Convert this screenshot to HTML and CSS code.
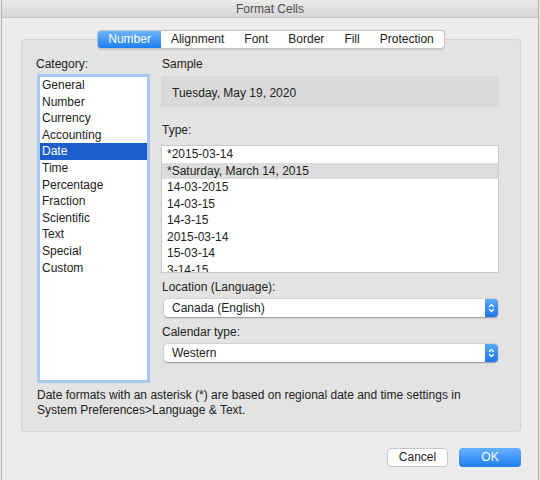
FILE: index.html
```html
<!DOCTYPE html>
<html>
<head>
<meta charset="utf-8">
<link rel="stylesheet" href="styles.css">
</head>
<body>
<div class="window">
  <div class="titlebar">Format Cells</div>
  <div class="tabs-row">
    <div class="tabs">
      <span class="tab selected">Number</span>
      <span class="tab">Alignment</span>
      <span class="tab">Font</span>
      <span class="tab">Border</span>
      <span class="tab">Fill</span>
      <span class="tab">Protection</span>
    </div>
  </div>
  <div class="panel">
    <div class="columns">
      <div class="left-col">
        <div class="label">Category:</div>
        <ul class="category-list">
          <li>General</li>
          <li>Number</li>
          <li>Currency</li>
          <li>Accounting</li>
          <li class="active">Date</li>
          <li>Time</li>
          <li>Percentage</li>
          <li>Fraction</li>
          <li>Scientific</li>
          <li>Text</li>
          <li>Special</li>
          <li>Custom</li>
        </ul>
      </div>
      <div class="right-col">
        <div class="label">Sample</div>
        <div class="sample">Tuesday, May 19, 2020</div>
        <div class="label type-label">Type:</div>
        <ul class="type-list">
          <li>*2015-03-14</li>
          <li class="hl">*Saturday, March 14, 2015</li>
          <li>14-03-2015</li>
          <li>14-03-15</li>
          <li>14-3-15</li>
          <li>2015-03-14</li>
          <li>15-03-14</li>
          <li>3-14-15</li>
        </ul>
        <div class="label loc-label">Location (Language):</div>
        <div class="select">
          <span class="select-text">Canada (English)</span>
          <span class="select-btn"><svg width="13" height="18" viewBox="0 0 13 18"><path d="M4.5 7.5 L6.5 5.5 L8.5 7.5 M4.5 10.5 L6.5 12.5 L8.5 10.5" fill="none" stroke="#fff" stroke-width="1.3" stroke-linecap="round" stroke-linejoin="round"/></svg></span>
        </div>
        <div class="label cal-label">Calendar type:</div>
        <div class="select">
          <span class="select-text">Western</span>
          <span class="select-btn"><svg width="13" height="18" viewBox="0 0 13 18"><path d="M4.5 7.5 L6.5 5.5 L8.5 7.5 M4.5 10.5 L6.5 12.5 L8.5 10.5" fill="none" stroke="#fff" stroke-width="1.3" stroke-linecap="round" stroke-linejoin="round"/></svg></span>
        </div>
      </div>
    </div>
    <p class="note">Date formats with an asterisk (*) are based on regional date and time settings in<br>System Preferences&gt;Language &amp; Text.</p>
  </div>
  <div class="buttons">
    <span class="btn cancel">Cancel</span>
    <span class="btn ok">OK</span>
  </div>
</div>
</body>
</html>
```
FILE: styles.css
```css
html, body {
  margin: 0;
  padding: 0;
  background: #e6e6e6;
}
body {
  font-family: "Liberation Sans", Arial, sans-serif;
  font-size: 12px;
  color: #222;
}
.window {
  margin: 0 1px;
  width: 536px;
  height: 480px;
  border-left: 1px solid #b4b4b4;
  border-right: 1px solid #b4b4b4;
  background: #ececec;
  overflow: hidden;
}
.titlebar {
  height: 17px;
  line-height: 18px;
  text-align: center;
  color: #4f4f4f;
  font-size: 12px;
  background: linear-gradient(#ebebeb, #d6d6d6);
  border-bottom: 1px solid #c6c6c6;
}
.tabs-row {
  margin: 12px 0 0 19px;
  width: 500px;
  display: flex;
  justify-content: center;
  position: relative;
  z-index: 1;
}
.tabs {
  display: flex;
  height: 17px;
  background: #fff;
  border: 1px solid #c4c4c4;
  border-radius: 4px;
  box-shadow: 0 0.5px 1px rgba(0,0,0,0.12);
  overflow: hidden;
}
.tab {
  padding: 0 10px;
  line-height: 17px;
  color: #222;
}
.tab.selected {
  color: #fff;
  background: linear-gradient(#6cb4fb, #1d7ff1);
}
.panel {
  margin: -10px 0 0 19px;
  width: 498px;
  height: 391px;
  border: 1px solid #d6d6d6;
  border-radius: 4px;
  background: #e3e3e3;
  padding: 0;
  box-sizing: content-box;
}
.columns {
  display: flex;
  gap: 12px;
  padding: 17px 0 0 14px;
}
.label {
  line-height: 15px;
  height: 15px;
}
.left-col {
  width: 113px;
}
.category-list {
  list-style: none;
  margin: 2px 0 0 1px;
  padding: 0;
  width: 107px;
  height: 303px;
  background: #fff;
  border: 3px solid #a9c7ef;
  border-radius: 2px;
}
.category-list li {
  height: 16.6px;
  line-height: 16.6px;
  padding-left: 2px;
  color: #222;
}
.category-list li.active {
  background: #1c5fcc;
  color: #fff;
}
.right-col {
  width: 338px;
  display: flex;
  flex-direction: column;
}
.right-col .label {
  padding-left: 1px;
}
.sample {
  margin-top: 4px;
  height: 31px;
  line-height: 34px;
  background: #d9d9d9;
  border-radius: 2px;
  padding-left: 11px;
  color: #222;
}
.type-label {
  margin-top: 16px;
}
.type-list {
  list-style: none;
  margin: 7px 0 0 0;
  padding: 0;
  height: 126px;
  border: 1px solid #c9c9c9;
  background: #fff;
  overflow: hidden;
}
.type-list li {
  height: 16.5px;
  line-height: 17.5px;
  padding-left: 5px;
  color: #222;
}
.type-list li.hl {
  background: #dcdcdc;
}
.loc-label {
  margin-top: 7px;
}
.cal-label {
  margin-top: 8px;
}
.select {
  margin: 4px 1px 0 3px;
  height: 18px;
  display: flex;
  background: #fff;
  border-radius: 4px;
  box-shadow: 0 0.5px 1.5px rgba(0,0,0,0.35);
  overflow: hidden;
}
.select-text {
  flex: 1;
  line-height: 18px;
  padding-left: 8px;
  color: #222;
}
.select-btn {
  width: 13px;
  height: 18px;
  background: linear-gradient(#5aaaf9, #1e76ee);
  display: flex;
}
.note {
  margin: 5px 0 0 15px;
  line-height: 15px;
  color: #222;
}
.buttons {
  margin: 16px 0 0 0;
  width: 519px;
  display: flex;
  justify-content: flex-end;
  gap: 11px;
}
.btn {
  height: 19px;
  line-height: 19px;
  text-align: center;
  border-radius: 4px;
  box-sizing: border-box;
}
.cancel {
  width: 61px;
  background: #fff;
  border: 1px solid #c8c8c8;
  line-height: 17px;
  color: #222;
}
.ok {
  width: 62px;
  color: #fff;
  background: linear-gradient(#66b1fb, #1f7ef2);
}
```
